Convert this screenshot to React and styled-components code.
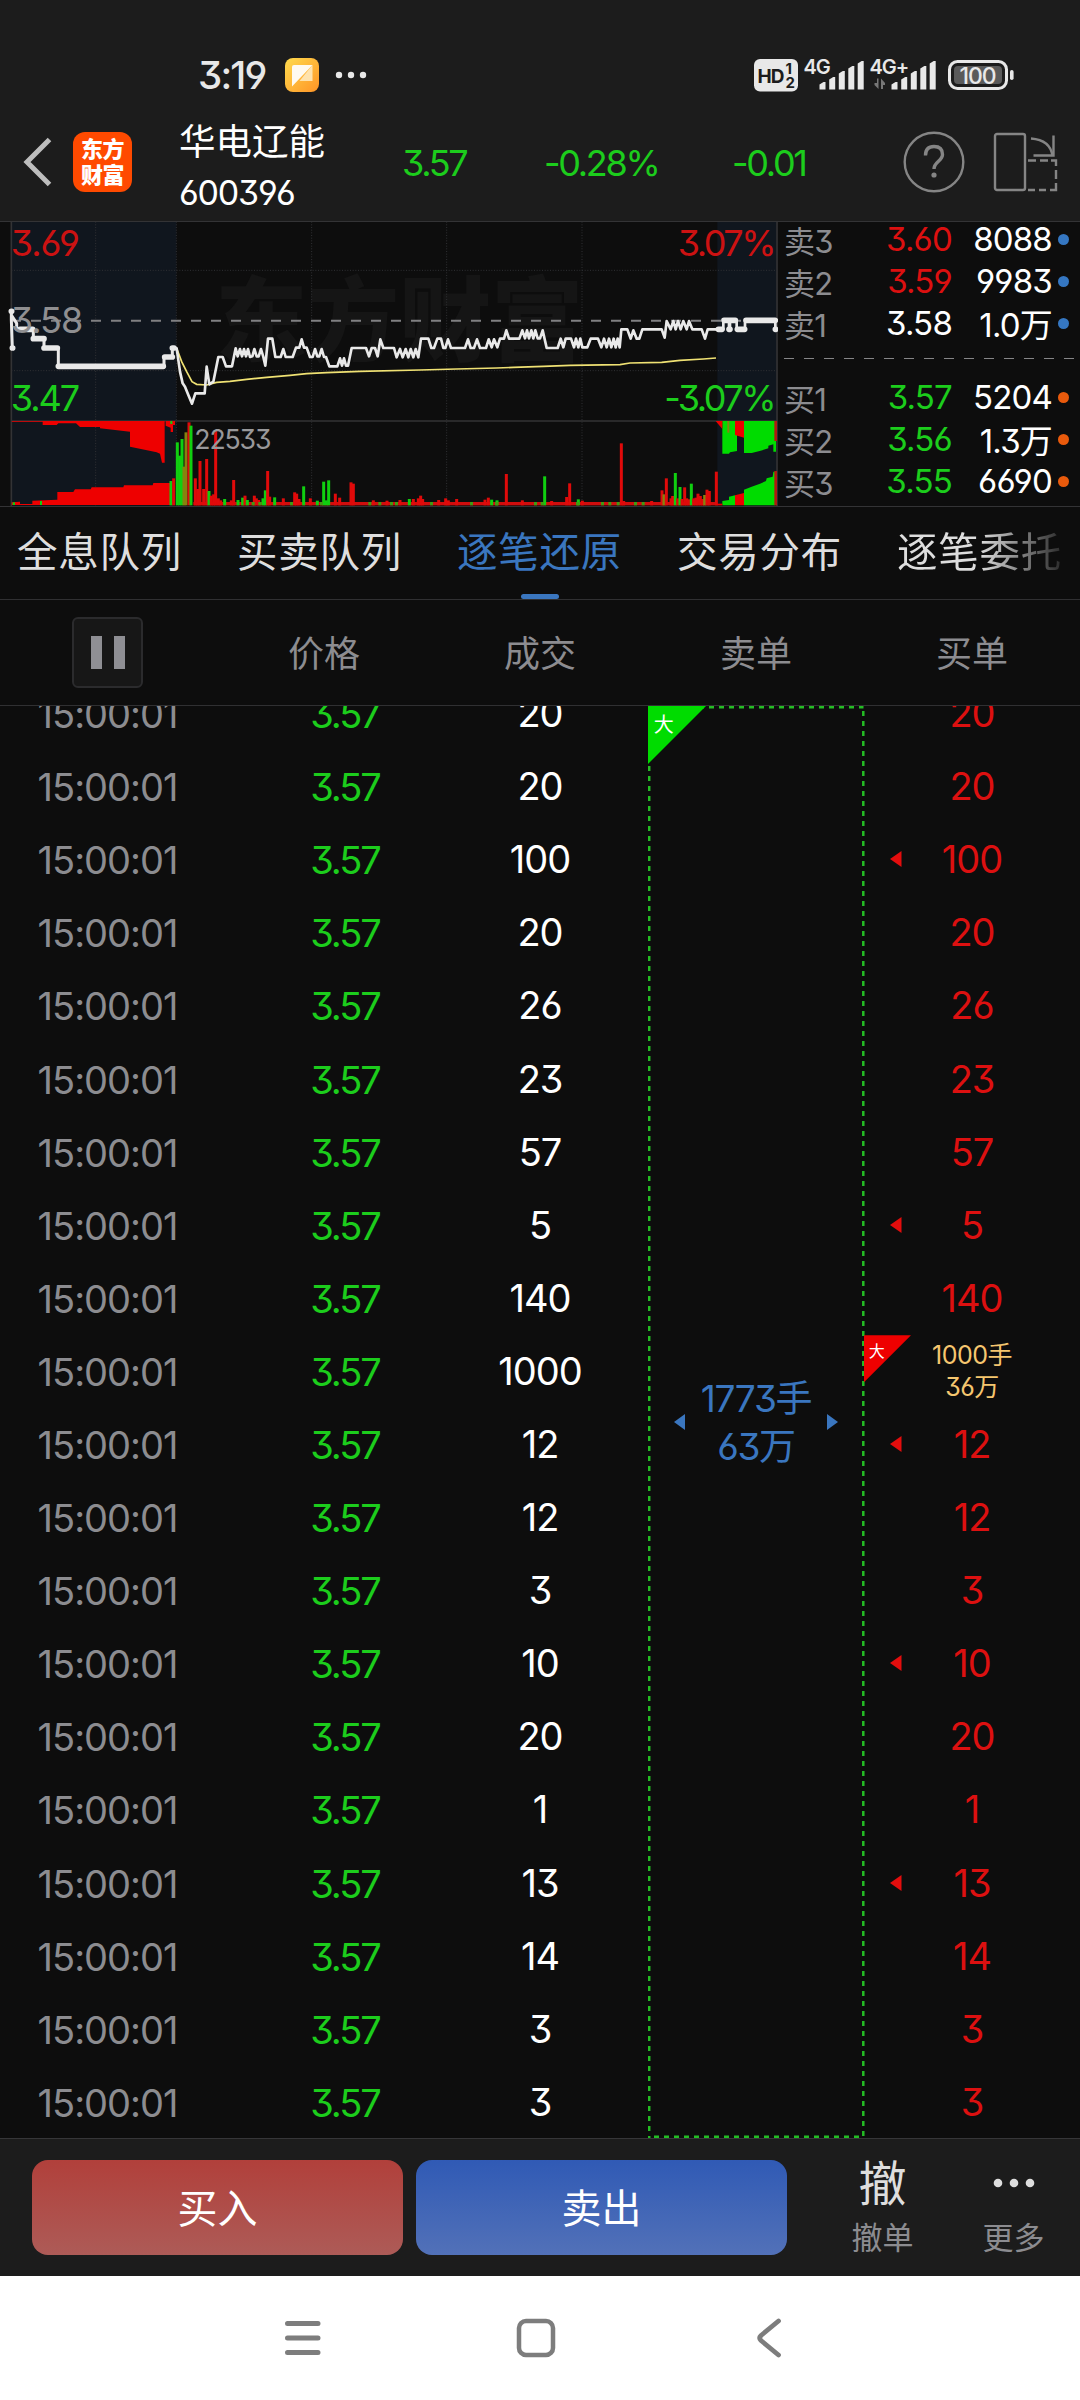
import React, { useState } from "react"
import styled, { createGlobalStyle, css } from "styled-components"

const RED = "#dc1010"
const GREEN = "#1ccd1c"
const BLUE = "#3a76bf"
const GREY = "#8c8c90"
const BAR_COLORS = { r: "#e00a0a", g: "#10cf10", o: "#86830f" }

const orders = [
   { volume: 20 },
   { volume: 20 },
   { volume: 100, start: true },
   { volume: 20 },
   { volume: 26 },
   { volume: 23 },
   { volume: 57 },
   { volume: 5, start: true },
   { volume: 140 },
   { volume: 1000, big: { lots: "1000手", amount: "36万" } },
   { volume: 12, start: true },
   { volume: 12 },
   { volume: 3 },
   { volume: 10, start: true },
   { volume: 20 },
   { volume: 1 },
   { volume: 13, start: true },
   { volume: 14 },
   { volume: 3 },
   { volume: 3 },
]

const asks = [
   { label: "卖3", price: "3.60", volume: "8088", color: RED },
   { label: "卖2", price: "3.59", volume: "9983", color: RED },
   { label: "卖1", price: "3.58", volume: "1.0万", color: "#fff" },
]

const bids = [
   { label: "买1", price: "3.57", volume: "5204", color: GREEN },
   { label: "买2", price: "3.56", volume: "1.3万", color: GREEN },
   { label: "买3", price: "3.55", volume: "6690", color: GREEN },
]

const tabs = ["全息队列", "买卖队列", "逐笔还原", "交易分布", "逐笔委托"]

// chart units are a third of a pixel
const PRICE_LINE =
   "530,400 540,470 548,505 555,515 565,540 576,566 586,535 614,535 620,455 628,508 640,500 655,426 668,426 678,454 696,454 707,400 713,424 720,402 726,424 732,402 738,424 744,402 750,426 757,424 763,402 770,424 776,424 783,402 790,426 796,452 804,371 817,371 826,426 842,426 850,402 857,426 878,426 888,398 898,398 905,373 912,398 920,398 930,426 938,426 945,402 952,424 958,424 965,402 972,426 978,426 988,454 1012,454 1020,430 1026,452 1032,430 1038,452 1044,452 1055,399 1098,399 1107,424 1115,399 1125,399 1133,424 1141,373 1150,399 1182,399 1190,427 1200,402 1208,427 1217,402 1225,427 1232,402 1240,427 1247,402 1255,427 1263,371 1285,371 1294,399 1302,399 1312,371 1323,371 1330,399 1336,399 1344,373 1353,399 1395,399 1404,373 1412,399 1422,399 1431,373 1440,399 1458,399 1466,373 1475,397 1482,373 1492,397 1500,371 1512,371 1519,346 1527,371 1558,371 1567,346 1575,370 1581,346 1587,370 1594,346 1600,370 1606,346 1613,370 1620,370 1628,346 1640,399 1673,399 1682,371 1690,397 1697,371 1713,371 1722,397 1728,371 1735,397 1741,371 1747,397 1762,397 1772,371 1794,371 1804,397 1812,371 1820,397 1827,371 1834,397 1841,371 1847,397 1853,371 1859,397 1864,343 1882,343 1892,371 1900,346 1910,371 1918,371 1927,343 1985,343 1994,368 2000,318 2012,343 2020,318 2027,343 2034,318 2042,343 2050,318 2060,343 2067,318 2077,343 2105,343 2115,371 2123,343 2150,343"

const AVERAGE_LINE =
   "530,400 545,440 560,470 576,500 590,508 620,510 650,502 690,499 740,493 800,487 870,481 920,476 980,473 1080,469 1260,465 1370,462 1490,459 1540,457 1630,454 1710,451 1860,449 1890,444 1985,442 2040,436 2110,432 2148,429"

// [x, top, color]
const volumeBars = [
   [513, 798, "g"], [521, 790, "r"], [532, 682, "g"], [539, 722, "g"], [546, 672, "g"], [552, 755, "o"], [558, 652, "o"], [567, 622, "r"], [573, 632, "g"],
   [586, 790, "r"], [593, 822, "r"], [600, 738, "r"], [611, 822, "r"], [620, 732, "r"], [627, 828, "g"], [634, 842, "r"], [641, 838, "r"], [647, 645, "r"], [655, 850, "r"],
   [662, 856, "r"], [674, 852, "g"], [694, 856, "r"], [701, 795, "r"], [714, 855, "g"], [728, 848, "g"], [735, 842, "r"], [742, 855, "g"], [763, 842, "r"], [769, 850, "r"],
   [776, 855, "r"], [789, 850, "g"], [796, 826, "g"], [803, 768, "r"], [809, 845, "r"], [824, 847, "g"], [850, 850, "r"], [884, 832, "r"], [890, 836, "r"], [897, 852, "r"],
   [911, 814, "g"], [931, 850, "r"], [952, 857, "g"], [971, 800, "g"], [979, 856, "g"], [986, 796, "g"], [1006, 836, "r"], [1019, 848, "r"], [1053, 802, "r"], [1060, 806, "r"],
   [1120, 856, "r"], [1161, 857, "r"], [1200, 855, "r"], [1228, 852, "g"], [1240, 852, "r"], [1255, 850, "r"], [1262, 842, "r"], [1268, 852, "r"], [1316, 855, "r"],
   [1337, 850, "r"], [1345, 856, "r"], [1370, 852, "r"], [1455, 854, "r"], [1465, 848, "r"], [1475, 854, "g"], [1491, 856, "g"], [1519, 777, "r"], [1567, 856, "r"],
   [1634, 784, "g"], [1655, 858, "r"], [1700, 846, "r"], [1709, 805, "r"], [1735, 853, "g"], [1747, 857, "r"], [1864, 685, "r"], [1871, 858, "r"], [1955, 858, "r"],
   [1986, 826, "r"], [1992, 838, "o"], [1999, 790, "r"], [2013, 850, "r"], [2018, 843, "r"], [2026, 774, "g"], [2033, 850, "r"], [2040, 816, "g"], [2046, 852, "r"],
   [2054, 817, "r"], [2060, 850, "r"], [2067, 853, "r"], [2074, 806, "g"], [2081, 850, "r"], [2088, 848, "r"], [2094, 836, "r"], [2101, 843, "r"], [2108, 852, "r"],
   [2114, 840, "o"], [2121, 824, "r"], [2128, 828, "r"], [2149, 770, "r"],
]

const baseTicks = [755, 775, 870, 960, 1105, 1135, 1170, 1185, 1290, 1410, 1485, 1602, 1622, 1728, 1803, 1825, 1850, 1902, 1925]

const PriceChart = () => (
   <ChartSvg viewBox="0 21 2334 852">
      <rect x="34" y="20" width="495" height="852" fill="#10161e" />
      <rect x="2152" y="20" width="178" height="852" fill="#10161e" />
      <Watermark x="646" y="416">东方财富</Watermark>

      <g stroke="#303134" strokeWidth="3" strokeDasharray="3 5">
         {[287, 529, 935, 1340, 1746].map((x) => <line key={x} x1={x} x2={x} y1="20" y2="872" />)}
         {[166, 467].map((y) => <line key={y} x1="34" x2="2328" y1={y} y2={y} />)}
      </g>
      <path d="M33 317H2330" stroke="#808082" strokeWidth="6" strokeDasharray="30 30" />
      <g stroke="#333335" strokeWidth="5">
         <path d="M34 20V874M2331 20V874" />
         <path d="M34 618H2331" />
      </g>

      {/* auction volume before the open */}
      <g fill="#ee0000">
         <path d="M35 618V620H128V630H170L175 625H228L240 636H300V640L390 650V695L470 712L480 716L486 743H494V618Z" />
         <path d="M497 618V632L512 638V651H519V630H525V618Z" />
         <path d="M35 870V862L60 860V867H97V857L172 854V831H220L225 823H272L275 817H370L372 811H458L460 804H515V870Z" />
         <rect x="580" y="861" width="1572" height="10" fill="#d00d0d" />
      </g>
      {volumeBars.map(([x, top, color]) => (
         <rect key={x} x={x - 4.5} y={top} width="9" height={871 - top} fill={BAR_COLORS[color]} />
      ))}
      {baseTicks.map((x) => <rect key={x} x={x} y="861" width="9" height="10" fill="#3f9c12" />)}
      <rect x="38" y="862" width="7" height="8" fill={BAR_COLORS.g} />
      <rect x="120" y="858" width="6" height="12" fill={BAR_COLORS.g} />
      <rect x="511" y="618" width="6" height="9" fill={BAR_COLORS.g} />

      {/* closing auction volume */}
      <g fill="#00dc00">
         <path d="M2167 618V716H2187L2190 712L2211 708V618Z" />
         <path d="M2232 618V714H2255L2282 707L2305 700V692L2320 688V710H2328V618Z" />
         <path d="M2167 871V858L2187 855V845L2205 841V871Z" />
         <path d="M2232 871V824L2255 815L2280 806L2298 798L2300 790L2318 785L2320 770H2326V871Z" />
      </g>
      <g fill="#ee0000">
         <path d="M2147 618H2167V642Z" />
         <path d="M2205 618V660L2232 668V618Z" />
         <path d="M2205 841L2232 834V871H2205Z" />
         <rect x="2150" y="866" width="17" height="5" />
         <rect x="2323" y="618" width="8" height="60" fill="#b01a10" />
         <rect x="2323" y="768" width="8" height="103" fill="#b01a10" />
         <rect x="2182" y="618" width="6" height="35" fill={BAR_COLORS.o} />
      </g>

      <polyline points={AVERAGE_LINE} fill="none" stroke="#efe173" strokeWidth="5" />
      <g fill="none" stroke="#e9e9e9" strokeLinejoin="round" strokeLinecap="round">
         <polyline points={PRICE_LINE} strokeWidth="8" />
         <path d="M34 289V315L37 399M34 300L50 325V343H100V371H132V399H175V454H492V426H517V399H526" strokeWidth="9" />
         <path d="M100 371H132M132 399H172M175 454H490M494 426H517M517 399H522M60 343H98M37 399H38M34 289H35" strokeWidth="17" />
         <path d="M2150 343H2170V316H2187V343H2190V316H2210V343H2235V316H2326V343" strokeWidth="8" />
         <path d="M2155 343H2166M2172 316H2206M2187 343H2190M2212 343H2234M2238 316H2326M2326 343H2327" strokeWidth="17" />
      </g>

      <ChartLabel x="32" y="124" fill="#cc1212">3.69</ChartLabel>
      <ChartLabel x="32" y="354" fill="#8f8f91">3.58</ChartLabel>
      <ChartLabel x="32" y="588" fill={GREEN} $spacing={-6}>3.47</ChartLabel>
      <ChartLabel x="2322" y="124" fill="#cc1212" textAnchor="end" $spacing={-7.5}>3.07%</ChartLabel>
      <ChartLabel x="2322" y="588" fill={GREEN} textAnchor="end" $spacing={-7.5}>-3.07%</ChartLabel>
      <ChartLabel x="583" y="702" fill="#98989a" $small $spacing={-3.5}>22533</ChartLabel>
   </ChartSvg>
)

const Signal = ({ label, x, data }) => (
   <SignalSvg width={data ? 66 : 60} height="34" viewBox={`0 0 ${data ? 66 : 60} 34`} fill="#e8e8e8">
      <StatusText x="-0.5" y="15.5">{label}</StatusText>
      {[[0, 24], [9.7, 19], [19.3, 13], [28.8, 8], [38.2, 3]].map(([dx, top]) => (
         <path key={dx} d={`M${x + dx} 31.5V${top + 2.5}L${x + dx + 4} ${top}H${x + dx + 6}V31.5Z`} />
      ))}
      {data && <path d="M8.5 20.5V31L4.5 27V25H7V20.5ZM11 31V20.5L15 25V27H13V31Z" fill="#777" />}
   </SignalSvg>
)

const StatusBar = () => (
   <Status>
      <Clock>3:19</Clock>
      <svg width="34" height="34" viewBox="0 0 34 34">
         <defs>
            <linearGradient id="note" x1="0" y1="0" x2="1" y2="1">
               <stop offset="0" stopColor="#ffdb4d" />
               <stop offset="1" stopColor="#ff9426" />
            </linearGradient>
         </defs>
         <rect width="34" height="34" rx="8" fill="url(#note)" />
         <path d="M27.5 7V23H14.5L27.5 7Z" fill="#ffe3ae" />
         <path d="M9 7H27.5L7 28.5V9Q7 7 9 7Z" fill="#fffaf0" />
      </svg>
      <DotsSmall width="32" height="8" viewBox="0 0 32 8" fill="#e8e8e8">
         <circle cx="4" cy="4" r="3.2" />
         <circle cx="16" cy="4" r="3.2" />
         <circle cx="28" cy="4" r="3.2" />
      </DotsSmall>
      <StatusRight>
         <svg width="44" height="34" viewBox="0 0 44 34">
            <rect y="1" width="44" height="32.5" rx="6" fill="#e8e8e8" />
            <HdText x="3.5" y="24.5" fontSize="19">HD</HdText>
            <HdText x="31.5" y="16" fontSize="15">1</HdText>
            <HdText x="31.5" y="30" fontSize="15">2</HdText>
         </svg>
         <Signal label="4G" x={15.5} />
         <Signal label="4G+" x={21.5} data />
         <Battery width="67" height="30" viewBox="0 0 67 30">
            <rect x="1.5" y="1.5" width="57" height="27" rx="8" fill="none" stroke="#e8e8e8" strokeWidth="3" />
            <rect x="6" y="6" width="48" height="18" rx="4" fill="#5a5a5a" />
            <rect x="62" y="10" width="3.6" height="10" rx="1.8" fill="#e8e8e8" />
            <BatteryText x="29.5" y="23.5">100</BatteryText>
         </Battery>
      </StatusRight>
   </Status>
)

const TitleBar = () => (
   <Title>
      <BackIcon width="32" height="54" viewBox="0 0 32 54">
         <path d="M27.500 4.500L5 27L27.500 49.500" fill="none" stroke="#bdbdbd" strokeWidth="5" />
      </BackIcon>
      <Logo>
         <span>东方</span>
         <span>财富</span>
      </Logo>
      <Stock>
         <StockName>华电辽能</StockName>
         <StockCode>600396</StockCode>
      </Stock>
      <Quote>3.57</Quote>
      <Quote>-0.28%</Quote>
      <Quote>-0.01</Quote>
      <svg width="62" height="62" viewBox="0 0 62 62" fill="none" stroke="#858585">
         <circle cx="31" cy="31" r="29.300" strokeWidth="2.400" />
         <path d="M22.500 24.500Q22.500 15.500 31 15.500T39.500 23.500C39.500 30 31 30.500 31 38" strokeWidth="3.400" />
         <circle cx="31" cy="44" r="2.600" fill="#858585" stroke="none" />
      </svg>
      <svg width="66" height="62" viewBox="0 0 66 62" fill="none" stroke="#858585" strokeWidth="2.400">
         <rect x="2" y="3" width="30" height="56" rx="2" />
         <path d="M38 7.500C51 8.500 58 14 59.500 25" />
         <path d="M60.500 4.500V24.500H40.500" />
         <path d="M35 29.500H43M47 29.500H55M58 29.500H63V35M63 39V48M63 52V59H57M53 59H46M42 59H35" />
      </svg>
   </Title>
)

const BookRow = ({ item, dot }) => (
   <BookLine>
      <BookLabel>{item.label}</BookLabel>
      <BookPrice $color={item.color}>{item.price}</BookPrice>
      <BookVolume>{item.volume}</BookVolume>
      <BookDot $color={dot} />
   </BookLine>
)

const App = () => {
   const [active, setActive] = useState(2)
   const [paused, setPaused] = useState(false)

   return (
      <Page>
         <GlobalStyle />
         <StatusBar />
         <TitleBar />

         <Market>
            <PriceChart />
            <Book>
               {asks.map((item) => <BookRow key={item.label} item={item} dot="#3577c2" />)}
               <BookDivider />
               {bids.map((item) => <BookRow key={item.label} item={item} dot="#e95a0c" />)}
            </Book>
         </Market>

         <Tabs>
            {tabs.map((tab, i) => (
               <Tab key={tab} $active={i === active} $fade={i === tabs.length - 1} onClick={() => setActive(i)}>
                  <span>{tab}</span>
               </Tab>
            ))}
         </Tabs>

         <TableHead>
            <HeadCell>
               <PauseButton onClick={() => setPaused(!paused)}>
                  <i />
                  <i />
               </PauseButton>
            </HeadCell>
            <HeadCell><span>价格</span></HeadCell>
            <HeadCell><span>成交</span></HeadCell>
            <HeadCell><span>卖单</span></HeadCell>
            <HeadCell><span>买单</span></HeadCell>
         </TableHead>

         <TableBody>
            <Rows>
               {orders.map((order, i) => (
                  <TradeRow key={i}>
                     <Time>15:00:01</Time>
                     <Price>3.57</Price>
                     <Volume>{order.volume}</Volume>
                  </TradeRow>
               ))}
            </Rows>

            <SellBlock>
               <Outline width="219" height="1432" viewBox="0 0 219 1432" fill="none" stroke="#24bd24" strokeWidth="2.500">
                  <path d="M1 1.300H215.500" strokeDasharray="5 5" />
                  <path d="M215.300 5V1432M1.200 0V1432" strokeDasharray="5 5" />
                  <path d="M6 1430.700H215.500" strokeDasharray="5 5" />
               </Outline>
               <Corner $size={58} $color="#00dc00" $font={20}>大</Corner>
               <Triangle width="12" height="16" viewBox="0 0 12 16" fill={BLUE}><path d="M11 0V16L0 8Z" /></Triangle>
               <SellTotal>
                  <span>1773手</span>
                  <span>63万</span>
               </SellTotal>
               <Triangle width="12" height="16" viewBox="0 0 12 16" fill={BLUE}><path d="M1 0V16L12 8Z" /></Triangle>
            </SellBlock>

            <Rows>
               {orders.map((order, i) => (
                  <BuyCell key={i}>
                     {order.start && <StartMark width="12" height="16" viewBox="0 0 12 16" fill="#e30d0d"><path d="M11.500 0V16L0 8Z" /></StartMark>}
                     {order.big && <Corner $size={47} $color="#ee0000" $font={16}>大</Corner>}
                     {order.big
                        ? <BigOrder><span>{order.big.lots}</span><span>{order.big.amount}</span></BigOrder>
                        : order.volume}
                  </BuyCell>
               ))}
            </Rows>
         </TableBody>

         <ActionBar>
            <TradeButton $from="#b1403b" $to="#ad5b57">买入</TradeButton>
            <TradeButton $from="#305ab5" $to="#5271b8">卖出</TradeButton>
            <Actions>
               <Action>
                  <ActionGlyph>撤</ActionGlyph>
                  <ActionLabel>撤单</ActionLabel>
               </Action>
               <Action>
                  <ActionGlyph>
                     <DotsLarge width="42" height="10" viewBox="0 0 42 10" fill="#dedede">
                        <circle cx="5" cy="5" r="4.300" />
                        <circle cx="21" cy="5" r="4.300" />
                        <circle cx="37" cy="5" r="4.300" />
                     </DotsLarge>
                  </ActionGlyph>
                  <ActionLabel>更多</ActionLabel>
               </Action>
            </Actions>
         </ActionBar>

         <SystemNav>
            <svg width="40" height="40" viewBox="0 0 40 40" stroke="#7d7d7d" strokeWidth="5" strokeLinecap="round">
               <path d="M4.500 5.500H35M4.500 20H35M4.500 34.500H35" />
            </svg>
            <svg width="40" height="40" viewBox="0 0 40 40" fill="none" stroke="#7d7d7d" strokeWidth="4.500">
               <rect x="3" y="3" width="34" height="34" rx="7" />
            </svg>
            <svg width="40" height="40" viewBox="0 0 40 40" fill="none" stroke="#7d7d7d" strokeWidth="4.800" strokeLinecap="round" strokeLinejoin="round">
               <path d="M29.500 3L12 17.500Q9.500 20 12 22.500L29.500 37" />
            </svg>
         </SystemNav>
      </Page>
   )
}


const GlobalStyle = createGlobalStyle`
   * {
      box-sizing: border-box;
   }
   body {
      margin: 0;
      background: #0d0d0d;
      font-family: Inter, "Noto Sans CJK SC", sans-serif;
      font-feature-settings: "cv03", "cv04", "cv09";
   }
   svg {
      display: block;
      flex-shrink: 0;
   }
`

const Page = styled.div`
   display: flex;
   flex-direction: column;
   width: 1080px;
   height: 2400px;
   overflow: hidden;
   background: #0d0d0d;
   color: #fff;
`

const Status = styled.header`
   display: flex;
   align-items: center;
   height: 102px;
   padding: 48px 65px 0 198px;
   background: #1c1c1c;
`

const Clock = styled.span`
   width: 87px;
   font-size: 38.500px;
   font-weight: 500;
   letter-spacing: -1.8px;
   color: #e8e8e8;
`

const DotsSmall = styled.svg`
   margin-left: 16px;
`

const StatusRight = styled.div`
   display: flex;
   align-items: center;
   gap: 6px;
   margin-left: auto;
`

const SignalSvg = styled.svg`
   overflow: visible;
`

const StatusText = styled.text`
   font-size: 20px;
   font-weight: 600;
   letter-spacing: -1px;
`

const HdText = styled.text`
   font-weight: 700;
   letter-spacing: -1px;
   fill: #1c1c1c;
`

const Battery = styled.svg`
   margin-left: 6px;
`

const BatteryText = styled.text`
   font-size: 23px;
   font-weight: 500;
   letter-spacing: -1px;
   text-anchor: middle;
   fill: #e8e8e8;
`

const Title = styled.header`
   display: grid;
   grid-template-columns: 73px 106px 223px 142px 188px 171px 90px 1fr;
   align-items: center;
   height: 119px;
   padding-top: 1px;
   background: #1c1c1c;
`

const BackIcon = styled.svg`
   margin-left: 22px;
`

const Logo = styled.div`
   display: flex;
   flex-direction: column;
   align-items: center;
   justify-content: center;
   width: 59px;
   height: 60px;
   border-radius: 12px;
   background: #ff4a00;
   font-size: 22px;
   font-weight: 900;
   line-height: 26px;
   letter-spacing: -0.5px;
`

const Stock = styled.div`
   display: flex;
   flex-direction: column;
   padding-top: 10px;
`

const StockName = styled.span`
   font-size: 36.500px;
   line-height: 52px;
`

const StockCode = styled.span`
   font-size: 34px;
   line-height: 50px;
   letter-spacing: -1.2px;
`

const Quote = styled.span`
   padding-top: 2px;
   font-size: 36px;
   letter-spacing: -2.3px;
   color: ${GREEN};
`

const Market = styled.section`
   display: flex;
   height: 286px;
   border-top: 1px solid #333335;
   border-bottom: 1px solid #333335;
`

const ChartSvg = styled.svg`
   width: 778px;
   height: 284px;
`

const ChartLabel = styled.text`
   font-size: ${p => p.$small ? 80 : 108}px;
   letter-spacing: ${p => p.$spacing || -3}px;
`

const Watermark = styled.text`
   font-size: 276px;
   font-weight: 900;
   fill: #151515;
`

const Book = styled.div`
   display: flex;
   flex-direction: column;
   flex: 1;
   padding-left: 6px;
`

const BookLine = styled.div`
   display: flex;
   align-items: center;
   height: 42px;
   margin-top: -4px;
   margin-bottom: 4px;
   font-size: 33px;
   letter-spacing: -0.8px;
`

const BookLabel = styled.span`
   width: 80px;
   font-size: 31px;
   color: ${GREY};
`

const BookPrice = styled.span`
   width: 88px;
   text-align: right;
   color: ${p => p.$color};
`

const BookVolume = styled.span`
   width: 100px;
   text-align: right;
`

const BookDot = styled.i`
   width: 11px;
   height: 11px;
   margin-left: 6px;
   border-radius: 50%;
   background: ${p => p.$color};
`

const BookDivider = styled.div`
   height: 3px;
   margin: 10px 0 21px;
   background: repeating-linear-gradient(90deg, #858587 0 10px, transparent 10px 20px);
`

const Tabs = styled.nav`
   display: flex;
   height: 93px;
   border-bottom: 1px solid #303032;
`

const Tab = styled.div`
   display: flex;
   flex-direction: column;
   align-items: center;
   flex: 0 0 220px;
   height: 92px;
   padding-right: 21px;
   cursor: pointer;
   font-size: 40.500px;
   line-height: 91px;
   letter-spacing: 0.8px;
   color: ${p => p.$active ? BLUE : "#dedede"};

   span {
      height: 87px;
   }

   &::after {
      content: "";
      width: 38px;
      height: 5px;
      border-radius: 3px;
      background: ${p => p.$active ? BLUE : "transparent"};
   }

   ${p => p.$fade && css`
      span {
         background: linear-gradient(90deg, #dedede 50%, #2a2a2a);
         background-clip: text;
         color: transparent;
      }
   `}
`

const TableHead = styled.div`
   display: grid;
   grid-template-columns: repeat(5, 216px);
   height: 106px;
   border-bottom: 1px solid #303032;
`

const HeadCell = styled.div`
   display: flex;
   align-items: center;
   justify-content: center;
   font-size: 36px;
   color: ${GREY};

   span {
      padding-bottom: 3px;
   }
`

const PauseButton = styled.button`
   display: flex;
   align-items: center;
   justify-content: center;
   gap: 12px;
   width: 71px;
   height: 71px;
   margin: 0 1px 1px 0;
   padding: 0;
   border: 2px solid #2b2b2d;
   border-radius: 6px;
   background: #171717;
   cursor: pointer;

   i {
      width: 11px;
      height: 33px;
      background: #8f8f94;
   }
`

const TableBody = styled.div`
   display: flex;
   height: 1432px;
   overflow: hidden;
`

const Rows = styled.div`
   margin-top: -28.500px;
`

const TradeRow = styled.div`
   display: grid;
   grid-template-columns: repeat(3, 216px);
   align-items: center;
   height: 73.100px;
   font-size: 38px;
   text-align: center;
   letter-spacing: -1px;
`

const Time = styled.span`
   padding-right: 1px;
   color: ${GREY};
`

const Price = styled.span`
   padding-left: 42px;
   letter-spacing: -2px;
   color: ${GREEN};
`

const Volume = styled.span`
   margin-top: -2px;
`

const SellBlock = styled.div`
   position: relative;
   display: flex;
   align-items: center;
   justify-content: space-between;
   width: 216px;
   padding: 0 26px;
   color: ${BLUE};
`

const Outline = styled.svg`
   position: absolute;
   top: 0;
   left: 0;
`

const Corner = styled.div`
   position: absolute;
   top: 0;
   left: 0;
   width: ${p => p.$size}px;
   height: ${p => p.$size}px;
   padding: ${p => p.$size * 0.07}px ${p => p.$size * 0.1}px;
   clip-path: polygon(0 0, 100% 0, 0 100%);
   background: ${p => p.$color};
   color: #fff;
   font-size: ${p => p.$font}px;
   line-height: 1.5;
   text-align: left;
`

const Triangle = styled.svg``

const SellTotal = styled.div`
   display: flex;
   flex-direction: column;
   align-items: center;
   padding-top: 1px;
   font-size: 37px;
   line-height: 48px;
   letter-spacing: -1.3px;
`

const BuyCell = styled.div`
   position: relative;
   display: flex;
   align-items: center;
   justify-content: center;
   width: 216px;
   height: 73.100px;
   padding-bottom: 2px;
   font-size: 38px;
   letter-spacing: -1px;
   color: ${RED};
`

const StartMark = styled.svg`
   position: absolute;
   left: 26px;
`

const BigOrder = styled.div`
   display: flex;
   flex-direction: column;
   align-items: center;
   font-size: 25px;
   line-height: 32px;
   letter-spacing: -0.5px;
   color: #f5c66f;
`

const ActionBar = styled.footer`
   display: flex;
   align-items: center;
   height: 138px;
   padding-left: 32px;
   border-top: 1px solid #363638;
   background: #1c1c1c;
`

const TradeButton = styled.button`
   width: 371px;
   height: 95px;
   margin-right: 13px;
   padding: 0 0 4px;
   border: 0;
   border-radius: 16px;
   background: linear-gradient(${p => p.$from}, ${p => p.$to});
   color: #fff;
   font-family: inherit;
   font-size: 40px;
   cursor: pointer;
`

const Actions = styled.div`
   display: flex;
   padding-left: 17px;
`

const Action = styled.div`
   display: flex;
   flex-direction: column;
   align-items: center;
   width: 131px;
`

const ActionGlyph = styled.div`
   display: flex;
   align-items: center;
   justify-content: center;
   height: 50px;
   font-size: 48px;
   color: #dedede;
`

const DotsLarge = styled.svg`
   margin-top: 6px;
`

const ActionLabel = styled.span`
   margin-top: 11px;
   font-size: 31px;
   line-height: 44px;
   color: ${GREY};
`

const SystemNav = styled.footer`
   display: flex;
   align-items: center;
   gap: 193px;
   height: 124px;
   padding-left: 283px;
   background: #fff;
`

export default App
